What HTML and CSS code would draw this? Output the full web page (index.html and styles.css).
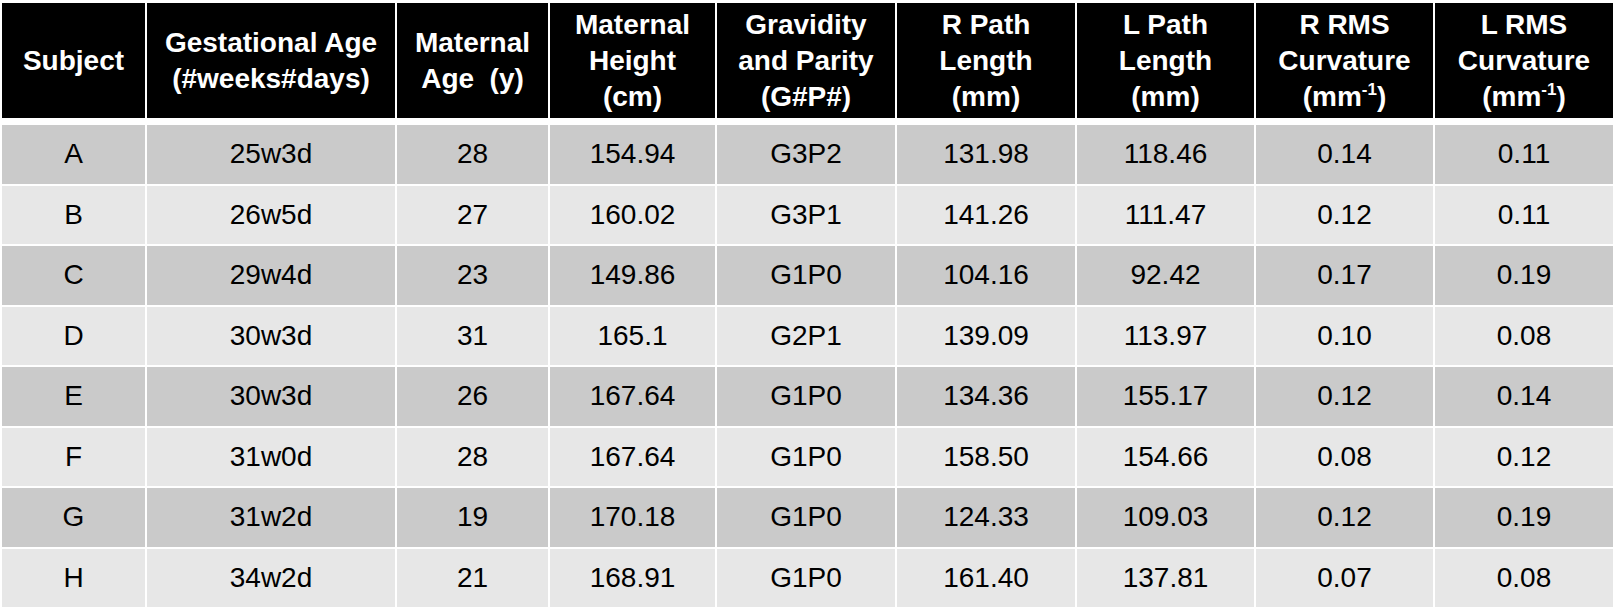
FILE: index.html
```html
<!DOCTYPE html>
<html lang="en">

<head>
    <meta charset="UTF-8">
    <meta name="viewport" content="width=device-width, initial-scale=1.0">
    <title>Subject Data</title>
    <link rel="stylesheet" href="styles.css">
</head>

<body>
    <table class="datos">
        <colgroup>
            <col class="c-subject">
            <col class="c-gest">
            <col class="c-age">
            <col class="c-height">
            <col class="c-grav">
            <col class="c-rpath">
            <col class="c-lpath">
            <col class="c-rrms">
            <col class="c-lrms">
        </colgroup>
        <thead>
            <tr>
                <th>Subject</th>
                <th>Gestational Age<br>(#weeks#days)</th>
                <th>Maternal<br>Age&nbsp; (y)</th>
                <th>Maternal<br>Height<br>(cm)</th>
                <th>Gravidity<br>and Parity<br>(G#P#)</th>
                <th>R Path<br>Length<br>(mm)</th>
                <th>L Path<br>Length<br>(mm)</th>
                <th>R RMS<br>Curvature<br>(mm<sup>-1</sup>)</th>
                <th>L RMS<br>Curvature<br>(mm<sup>-1</sup>)</th>
            </tr>
        </thead>
        <tbody>
            <tr class="oscura">
                <td>A</td><td>25w3d</td><td>28</td><td>154.94</td><td>G3P2</td><td>131.98</td><td>118.46</td><td>0.14</td><td>0.11</td>
            </tr>
            <tr class="clara">
                <td>B</td><td>26w5d</td><td>27</td><td>160.02</td><td>G3P1</td><td>141.26</td><td>111.47</td><td>0.12</td><td>0.11</td>
            </tr>
            <tr class="oscura">
                <td>C</td><td>29w4d</td><td>23</td><td>149.86</td><td>G1P0</td><td>104.16</td><td>92.42</td><td>0.17</td><td>0.19</td>
            </tr>
            <tr class="clara">
                <td>D</td><td>30w3d</td><td>31</td><td>165.1</td><td>G2P1</td><td>139.09</td><td>113.97</td><td>0.10</td><td>0.08</td>
            </tr>
            <tr class="oscura">
                <td>E</td><td>30w3d</td><td>26</td><td>167.64</td><td>G1P0</td><td>134.36</td><td>155.17</td><td>0.12</td><td>0.14</td>
            </tr>
            <tr class="clara">
                <td>F</td><td>31w0d</td><td>28</td><td>167.64</td><td>G1P0</td><td>158.50</td><td>154.66</td><td>0.08</td><td>0.12</td>
            </tr>
            <tr class="oscura">
                <td>G</td><td>31w2d</td><td>19</td><td>170.18</td><td>G1P0</td><td>124.33</td><td>109.03</td><td>0.12</td><td>0.19</td>
            </tr>
            <tr class="clara">
                <td>H</td><td>34w2d</td><td>21</td><td>168.91</td><td>G1P0</td><td>161.40</td><td>137.81</td><td>0.07</td><td>0.08</td>
            </tr>
        </tbody>
    </table>
</body>

</html>
```

FILE: styles.css
```css
body {
    font-family: "Liberation Sans", Arial, sans-serif;
    margin: 0;
    padding-top: 1px;
    background-color: #fff;
}

.datos {
    width: 1615px;
    table-layout: fixed;
    border-collapse: separate;
    border-spacing: 2px;
}

.c-subject { width: 143px; }
.c-gest { width: 248px; }
.c-age { width: 151px; }
.c-height { width: 165px; }
.c-grav { width: 178px; }
.c-rpath { width: 178px; }
.c-lpath { width: 177px; }
.c-rrms { width: 177px; }
.c-lrms { width: 178px; }

th,
td {
    box-sizing: border-box;
    padding: 0;
    text-align: center;
    vertical-align: middle;
}

th {
    height: 120px;
    background-color: #000;
    color: #fff;
    font-size: 28px;
    font-weight: bold;
    line-height: 36px;
    border-bottom: 5px solid #fff;
}

th sup {
    font-size: 17px;
    line-height: 0;
    vertical-align: 11px;
}

td {
    height: 58.5px;
    font-size: 28px;
    color: #000;
}

.oscura td {
    background-color: #cacaca;
}

.clara td {
    background-color: #e7e7e7;
}
```
